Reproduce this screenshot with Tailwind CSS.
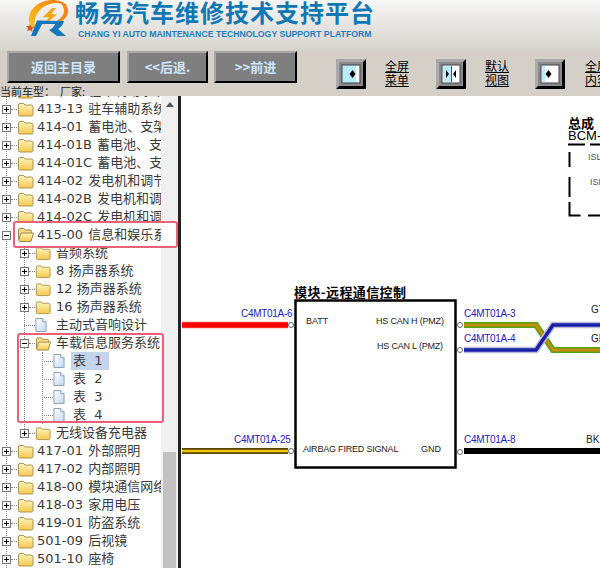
<!DOCTYPE html>
<html lang="zh">
<head>
    <meta charset="UTF-8">
    <title>畅易汽车维修技术支持平台</title>
    <script src="https://cdn.jsdelivr.net/npm/@tailwindcss/browser@4"></script>
</head>
<body class="bg-[#d4d0c8]">
    <!-- icon symbols -->
    <svg class="absolute w-0 h-0">
        <defs>
            <linearGradient id="fy" x1="0" y1="0" x2="0" y2="1"><stop offset="0" stop-color="#fff4bc"/><stop offset="1" stop-color="#f3c84e"/></linearGradient>
            <linearGradient id="dc" x1="0" y1="0" x2="1" y2="1"><stop offset="0" stop-color="#fff"/><stop offset="1" stop-color="#c4d8f0"/></linearGradient>
            <linearGradient id="ring" x1="0" y1="1" x2="1" y2="0"><stop offset="0" stop-color="#f7c520"/><stop offset="0.6" stop-color="#f59a10"/><stop offset="1" stop-color="#ee7a10"/></linearGradient>
        </defs>
        <symbol id="plus" viewBox="0 0 9 9"><rect x="0.5" y="0.5" width="8" height="8" fill="#fff" stroke="#777"/><path d="M2 4.500h5M4.500 2v5" stroke="#000"/></symbol>
        <symbol id="minus" viewBox="0 0 9 9"><rect x="0.5" y="0.5" width="8" height="8" fill="#fff" stroke="#777"/><path d="M2 4.500h5" stroke="#000"/></symbol>
        <symbol id="folder" viewBox="0 0 17 15"><path d="M1.500 12.500V3q0-1.500 1.500-1.500h3.500l1.500 1.500h6q2 0 2 1.500v8q0 1.500-1.500 1.500h-11.500q-1.500 0-1.500-1.500z" fill="url(#fy)" stroke="#b0934e"/></symbol>
        <symbol id="open" viewBox="0 0 17 15"><path d="M1.500 12.500V3q0-1.500 1.500-1.500h3.500l1.500 1.500h5q1.500 0 1.500 1.500v1.500" fill="#f8dc80" stroke="#a0844a"/><path d="M1.500 13.500l2.500-7.500h12.500l-2.500 8.500h-11.500z" fill="url(#fy)" stroke="#a0844a"/></symbol>
        <symbol id="doc" viewBox="0 0 13 15"><path d="M1 0.500h7.500l3.500 3.500v10.500h-11z" fill="url(#dc)" stroke="#7f9db9"/><path d="M8.500 0.500v3.500h3.500" fill="#fff" stroke="#7f9db9"/></symbol>
    </svg>

    <div class="relative w-[600px] h-[568px] overflow-hidden bg-[#d4d0c8] font-['Noto_Sans_CJK_SC',sans-serif]">
        <!-- header -->
        <header class="relative h-[50px] flex items-start bg-gradient-to-b from-[#f6f6f6] to-[#d6d4ce]">
            <svg class="ml-[20px] w-[60px] h-[42px] shrink-0" viewBox="20 0 60 42" fill="none">
                <path d="M31 27C24 14 36 0 52 0c7 0 12 2 16 6-6-3-12-4-18-2-11 3-17 13-15 23z" fill="url(#ring)"/>
                <path d="M59 2c7 1 10 6 9 11-1 4-4 7-8 9l-3-1c4-3 7-6 7-10 0-4-2-7-5-9z" fill="#ee8a12"/>
                <path d="M52 8l-9 9 6 .5-6 8 14-11-6-.5 5-6z" fill="#f5a514"/>
                <path d="M30 24.500l1.500 2.500 3 .5-2.500 1.500.5 3-2.500-2-3 1 1-3-2-2h3z" fill="#e2501c"/>
                <path d="M36 36l6-12h13c-1 3-3 5-6 6l8 6h9l-8-7c3-2 5-4 6-8h-3l-24-.5-6 15.500z" fill="#1578bc"/>
            </svg>
            <div class="ml-[-5px] shrink-0">
                <h1 class="text-[24px] leading-[30px] mt-[-3px] font-bold tracking-[1px] text-[#0f78b4] whitespace-nowrap">畅易汽车维修技术支持平台</h1>
                <p class="ml-[3px] mt-[2px] text-[8.700px] leading-[10px] font-bold text-[#1a7fc0] whitespace-nowrap font-['Liberation_Sans',sans-serif]">CHANG YI AUTO MAINTENANCE TECHNOLOGY SUPPORT PLATFORM</p>
            </div>
        </header>

        <!-- toolbar -->
        <div class="relative h-[36px] flex items-start [&>*]:shrink-0">
            <button class="ml-[7px] mt-[1px] w-[113px] h-[32px] bg-[#7f7f7f] border-2 border-t-[#a8a8a8] border-l-[#a8a8a8] border-r-black border-b-black text-[13px] font-bold text-[#cfe6ff]">返回主目录</button>
            <button class="ml-[7px] mt-[1px] w-[81px] h-[32px] bg-[#7f7f7f] border-2 border-t-[#a8a8a8] border-l-[#a8a8a8] border-r-black border-b-black text-[13px] font-bold text-[#cfe6ff]">&lt;&lt;后退.</button>
            <button class="ml-[6px] mt-[1px] w-[83px] h-[32px] bg-[#7f7f7f] border-2 border-t-[#a8a8a8] border-l-[#a8a8a8] border-r-black border-b-black text-[13px] font-bold text-[#cfe6ff]">&gt;&gt;前进</button>

            <svg class="ml-[39px] mt-[9px] w-[30px] h-[30px] relative z-10" viewBox="0 0 30 30">
                <path d="M0 0h30l-3 3h-24v24l-3 3z" fill="#a9a9a9"/><path d="M30 0v30h-30l3-3h24v-24z" fill="#000"/><rect x="3" y="3" width="24" height="24" fill="#8a8a8a"/>
                <rect x="6" y="6" width="18" height="18" fill="#b9ecff" stroke="#444"/><rect x="20" y="7" width="3" height="16" fill="#fff"/><path d="M16.500 11l3 4-3 4-3-4z" fill="#000"/>
            </svg>
            <a class="ml-[19px] mt-[9px] w-[24px] text-[12px] leading-[14px] underline text-black relative z-10">全屏<br>菜单</a>

            <svg class="ml-[27px] mt-[9px] w-[30px] h-[30px] relative z-10" viewBox="0 0 30 30">
                <path d="M0 0h30l-3 3h-24v24l-3 3z" fill="#a9a9a9"/><path d="M30 0v30h-30l3-3h24v-24z" fill="#000"/><rect x="3" y="3" width="24" height="24" fill="#8a8a8a"/>
                <rect x="6" y="6" width="18" height="18" fill="#fff" stroke="#444"/><rect x="7" y="7" width="8" height="16" fill="#b9ecff"/><rect x="15" y="7" width="1" height="16" fill="#555"/><path d="M10 11l3 4-3 4zM20 11l-3 4 3 4z" fill="#000"/>
            </svg>
            <a class="ml-[19px] mt-[9px] w-[24px] text-[12px] leading-[14px] underline text-black relative z-10">默认<br>视图</a>

            <svg class="ml-[26px] mt-[9px] w-[30px] h-[30px] relative z-10" viewBox="0 0 30 30">
                <path d="M0 0h30l-3 3h-24v24l-3 3z" fill="#a9a9a9"/><path d="M30 0v30h-30l3-3h24v-24z" fill="#000"/><rect x="3" y="3" width="24" height="24" fill="#8a8a8a"/>
                <rect x="6" y="6" width="18" height="18" fill="#fff" stroke="#444"/><rect x="7" y="7" width="3" height="16" fill="#b9ecff"/><path d="M13.500 11l-3 4 3 4 3-4z" fill="#000"/>
            </svg>
            <a class="ml-[20px] mt-[9px] w-[24px] text-[12px] leading-[14px] underline text-black relative z-10">全屏<br>内容</a>
        </div>

        <!-- status line -->
        <div class="relative z-10 h-[10px] text-[11px] leading-[11px] text-[#222] whitespace-pre">当前车型：  厂家:</div>

        <!-- main -->
        <div class="flex h-[472px]">
            <!-- tree panel -->
            <div class="relative w-[178px] shrink-0 bg-white overflow-hidden">
                <div class="relative w-[161px] h-[486px] overflow-hidden mt-[-14px] text-[13px] text-[#3a3a3a] font-['DejaVu_Sans','Noto_Sans_CJK_SC',sans-serif] [&_*]:shrink-0">
                    <!-- dotted guides -->
                    <div class="absolute left-[6px] top-0 h-[500px] border-l border-dotted border-[#888]"></div>
                    <div class="absolute left-[24px] top-[162px] h-[189px] border-l border-dotted border-[#888]"></div>
                    <div class="absolute left-[42px] top-[270px] h-[72px] border-l border-dotted border-[#888]"></div>

                    <div class="flex items-center h-[18px] whitespace-nowrap"><svg class="ml-[2px] w-[9px] h-[9px] relative"><use href="#plus"/></svg><span class="w-[6px] border-t border-dotted border-[#888]"></span><svg class="w-[17px] h-[15px]"><use href="#folder"/></svg><span class="ml-[3px] [word-spacing:1px]">413-12 驻车制动系统</span></div>
                    <div class="flex items-center h-[18px] whitespace-nowrap"><svg class="ml-[2px] w-[9px] h-[9px] relative"><use href="#plus"/></svg><span class="w-[6px] border-t border-dotted border-[#888]"></span><svg class="w-[17px] h-[15px]"><use href="#folder"/></svg><span class="ml-[3px] [word-spacing:1px]">413-13 驻车辅助系统</span></div>
                    <div class="flex items-center h-[18px] whitespace-nowrap"><svg class="ml-[2px] w-[9px] h-[9px] relative"><use href="#plus"/></svg><span class="w-[6px] border-t border-dotted border-[#888]"></span><svg class="w-[17px] h-[15px]"><use href="#folder"/></svg><span class="ml-[3px] [word-spacing:1px]">414-01 蓄电池、支架</span></div>
                    <div class="flex items-center h-[18px] whitespace-nowrap"><svg class="ml-[2px] w-[9px] h-[9px] relative"><use href="#plus"/></svg><span class="w-[6px] border-t border-dotted border-[#888]"></span><svg class="w-[17px] h-[15px]"><use href="#folder"/></svg><span class="ml-[3px] [word-spacing:1px]">414-01B 蓄电池、支架</span></div>
                    <div class="flex items-center h-[18px] whitespace-nowrap"><svg class="ml-[2px] w-[9px] h-[9px] relative"><use href="#plus"/></svg><span class="w-[6px] border-t border-dotted border-[#888]"></span><svg class="w-[17px] h-[15px]"><use href="#folder"/></svg><span class="ml-[3px] [word-spacing:1px]">414-01C 蓄电池、支架</span></div>
                    <div class="flex items-center h-[18px] whitespace-nowrap"><svg class="ml-[2px] w-[9px] h-[9px] relative"><use href="#plus"/></svg><span class="w-[6px] border-t border-dotted border-[#888]"></span><svg class="w-[17px] h-[15px]"><use href="#folder"/></svg><span class="ml-[3px] [word-spacing:1px]">414-02 发电机和调节器</span></div>
                    <div class="flex items-center h-[18px] whitespace-nowrap"><svg class="ml-[2px] w-[9px] h-[9px] relative"><use href="#plus"/></svg><span class="w-[6px] border-t border-dotted border-[#888]"></span><svg class="w-[17px] h-[15px]"><use href="#folder"/></svg><span class="ml-[3px] [word-spacing:1px]">414-02B 发电机和调节器</span></div>
                    <div class="flex items-center h-[18px] whitespace-nowrap"><svg class="ml-[2px] w-[9px] h-[9px] relative"><use href="#plus"/></svg><span class="w-[6px] border-t border-dotted border-[#888]"></span><svg class="w-[17px] h-[15px]"><use href="#folder"/></svg><span class="ml-[3px] [word-spacing:1px]">414-02C 发电机和调节器</span></div>
                    <!-- 415-00: folder and label live in the highlight box below -->
                    <div class="flex items-center h-[18px]"><svg class="ml-[2px] w-[9px] h-[9px] relative"><use href="#minus"/></svg></div>

                    <div class="flex items-center h-[18px] whitespace-nowrap pl-[20px]"><svg class="w-[9px] h-[9px] relative"><use href="#plus"/></svg><span class="w-[6px] border-t border-dotted border-[#888]"></span><svg class="w-[16px] h-[15px]"><use href="#folder"/></svg><span class="ml-[5px]">音频系统</span></div>
                    <div class="flex items-center h-[18px] whitespace-nowrap pl-[20px]"><svg class="w-[9px] h-[9px] relative"><use href="#plus"/></svg><span class="w-[6px] border-t border-dotted border-[#888]"></span><svg class="w-[16px] h-[15px]"><use href="#folder"/></svg><span class="ml-[5px]">8 扬声器系统</span></div>
                    <div class="flex items-center h-[18px] whitespace-nowrap pl-[20px]"><svg class="w-[9px] h-[9px] relative"><use href="#plus"/></svg><span class="w-[6px] border-t border-dotted border-[#888]"></span><svg class="w-[16px] h-[15px]"><use href="#folder"/></svg><span class="ml-[5px]">12 扬声器系统</span></div>
                    <div class="flex items-center h-[18px] whitespace-nowrap pl-[20px]"><svg class="w-[9px] h-[9px] relative"><use href="#plus"/></svg><span class="w-[6px] border-t border-dotted border-[#888]"></span><svg class="w-[16px] h-[15px]"><use href="#folder"/></svg><span class="ml-[5px]">16 扬声器系统</span></div>
                    <div class="flex items-center h-[18px] whitespace-nowrap pl-[24px]"><span class="w-[11px] border-t border-dotted border-[#888]"></span><svg class="w-[12px] h-[14px]"><use href="#doc"/></svg><span class="ml-[9px]">主动式音响设计</span></div>
                    <div class="flex items-center h-[18px] whitespace-nowrap pl-[20px]"><svg class="w-[9px] h-[9px] relative"><use href="#minus"/></svg><span class="w-[6px] border-t border-dotted border-[#888]"></span><svg class="w-[16px] h-[15px]"><use href="#open"/></svg><span class="ml-[5px]">车载信息服务系统</span></div>
                    <div class="flex items-center h-[18px] whitespace-nowrap pl-[42px]"><span class="w-[11px] border-t border-dotted border-[#888]"></span><svg class="w-[12px] h-[14px]"><use href="#doc"/></svg><span class="ml-[6px] px-[2px] bg-[#c3d5ea] leading-[18px] whitespace-pre">表  1 </span></div>
                    <div class="flex items-center h-[18px] whitespace-nowrap pl-[42px]"><span class="w-[11px] border-t border-dotted border-[#888]"></span><svg class="w-[12px] h-[14px]"><use href="#doc"/></svg><span class="ml-[8px] whitespace-pre">表  2</span></div>
                    <div class="flex items-center h-[18px] whitespace-nowrap pl-[42px]"><span class="w-[11px] border-t border-dotted border-[#888]"></span><svg class="w-[12px] h-[14px]"><use href="#doc"/></svg><span class="ml-[8px] whitespace-pre">表  3</span></div>
                    <div class="flex items-center h-[18px] whitespace-nowrap pl-[42px]"><span class="w-[11px] border-t border-dotted border-[#888]"></span><svg class="w-[12px] h-[14px]"><use href="#doc"/></svg><span class="ml-[8px] whitespace-pre">表  4</span></div>
                    <div class="flex items-center h-[18px] whitespace-nowrap pl-[20px]"><svg class="w-[9px] h-[9px] relative"><use href="#plus"/></svg><span class="w-[6px] border-t border-dotted border-[#888]"></span><svg class="w-[16px] h-[15px]"><use href="#folder"/></svg><span class="ml-[5px]">无线设备充电器</span></div>

                    <div class="flex items-center h-[18px] whitespace-nowrap"><svg class="ml-[2px] w-[9px] h-[9px] relative"><use href="#plus"/></svg><span class="w-[6px] border-t border-dotted border-[#888]"></span><svg class="w-[17px] h-[15px]"><use href="#folder"/></svg><span class="ml-[3px] [word-spacing:1px]">417-01 外部照明</span></div>
                    <div class="flex items-center h-[18px] whitespace-nowrap"><svg class="ml-[2px] w-[9px] h-[9px] relative"><use href="#plus"/></svg><span class="w-[6px] border-t border-dotted border-[#888]"></span><svg class="w-[17px] h-[15px]"><use href="#folder"/></svg><span class="ml-[3px] [word-spacing:1px]">417-02 内部照明</span></div>
                    <div class="flex items-center h-[18px] whitespace-nowrap"><svg class="ml-[2px] w-[9px] h-[9px] relative"><use href="#plus"/></svg><span class="w-[6px] border-t border-dotted border-[#888]"></span><svg class="w-[17px] h-[15px]"><use href="#folder"/></svg><span class="ml-[3px] [word-spacing:1px]">418-00 模块通信网络</span></div>
                    <div class="flex items-center h-[18px] whitespace-nowrap"><svg class="ml-[2px] w-[9px] h-[9px] relative"><use href="#plus"/></svg><span class="w-[6px] border-t border-dotted border-[#888]"></span><svg class="w-[17px] h-[15px]"><use href="#folder"/></svg><span class="ml-[3px] [word-spacing:1px]">418-03 家用电压</span></div>
                    <div class="flex items-center h-[18px] whitespace-nowrap"><svg class="ml-[2px] w-[9px] h-[9px] relative"><use href="#plus"/></svg><span class="w-[6px] border-t border-dotted border-[#888]"></span><svg class="w-[17px] h-[15px]"><use href="#folder"/></svg><span class="ml-[3px] [word-spacing:1px]">419-01 防盗系统</span></div>
                    <div class="flex items-center h-[18px] whitespace-nowrap"><svg class="ml-[2px] w-[9px] h-[9px] relative"><use href="#plus"/></svg><span class="w-[6px] border-t border-dotted border-[#888]"></span><svg class="w-[17px] h-[15px]"><use href="#folder"/></svg><span class="ml-[3px] [word-spacing:1px]">501-09 后视镜</span></div>
                    <div class="flex items-center h-[18px] whitespace-nowrap"><svg class="ml-[2px] w-[9px] h-[9px] relative"><use href="#plus"/></svg><span class="w-[6px] border-t border-dotted border-[#888]"></span><svg class="w-[17px] h-[15px]"><use href="#folder"/></svg><span class="ml-[3px] [word-spacing:1px]">501-10 座椅</span></div>
                </div>

                <!-- scrollbar -->
                <div class="absolute left-[161px] top-0 w-[17px] h-full bg-[#f0f0f0]">
                    <div class="mx-auto mt-[6px] w-0 h-0 border-x-[4px] border-x-transparent border-b-[5px] border-b-[#555]"></div>
                    <div class="absolute left-[2px] top-[356px] w-[13px] h-[116px] bg-[#c2c2c2]"></div>
                </div>

                <!-- red highlight boxes -->
                <div class="absolute left-[13px] top-[125px] w-[165px] h-[27px] bg-white border-[2px] border-[#ea6078] rounded-[3px] flex items-center overflow-hidden text-[13px] text-[#3a3a3a] font-['DejaVu_Sans','Noto_Sans_CJK_SC',sans-serif]">
                    <svg class="ml-[2px] w-[17px] h-[15px] shrink-0"><use href="#open"/></svg>
                    <span class="ml-[3px] w-[124px] overflow-hidden whitespace-nowrap shrink-0 [word-spacing:1px]">415-00 信息和娱乐系统</span>
                </div>
                <div class="absolute left-[17px] top-[237px] w-[147px] h-[90px] border-[2px] border-[#ea6078] rounded-[3px]"></div>
            </div>

            <div class="w-[3px] shrink-0 bg-[#222]"></div>

            <!-- wiring diagram -->
            <div class="relative flex-1 bg-white overflow-hidden font-['Liberation_Sans',sans-serif] text-[9px] leading-[11px] text-[#222] whitespace-nowrap">
                <svg class="absolute left-0 top-0 w-[419px] h-[472px]" viewBox="181 96 419 472" fill="none">
                    <!-- BCM dashed outline -->
                    <path d="M568 144.500h17M590 144.500h10M569.500 152v15M569.500 177v20M569.500 202v13.500h11M588 215.500h12" stroke="#000" stroke-width="2"/>
                    <!-- module -->
                    <rect x="295.500" y="300.500" width="160" height="167" fill="#fff" stroke="#000" stroke-width="2.500"/>
                    <!-- left wires -->
                    <path d="M182 325h106" stroke="#ffb0b0" stroke-width="7"/><path d="M182 325h106" stroke="#f00" stroke-width="5.500"/>
                    <path d="M182 451h106" stroke="#5c4300" stroke-width="6"/><path d="M182 451h106" stroke="#efc400" stroke-width="2.500"/>
                    <!-- right wires -->
                    <path d="M464 325h72l17 25h47" stroke="#4fa510" stroke-width="6"/><path d="M464 325h72l17 25h47" stroke="#c98a10" stroke-width="3"/>
                    <path d="M464 350h72l17-25h47" stroke="#b9bdd8" stroke-width="6.500"/><path d="M464 350h72l17-25h47" stroke="#1a1ea8" stroke-width="3.500"/>
                    <path d="M464 451h136" stroke="#000" stroke-width="6"/>
                    <!-- connectors -->
                    <g stroke="#666" fill="#fff">
                        <circle cx="291" cy="325" r="2.500"/><circle cx="291" cy="451" r="2.500"/>
                        <circle cx="460" cy="325" r="2.500"/><circle cx="460" cy="350" r="2.500"/><circle cx="460" cy="452" r="2.500"/>
                    </g>
                </svg>

                <div class="absolute left-[113px] top-[188px] text-[13px] leading-[16px] font-bold text-black tracking-[0.400px] font-['Noto_Sans_CJK_SC',sans-serif]">模块-远程通信控制</div>
                <div class="absolute left-[387px] top-[20px] text-[13px] leading-[13px] font-bold text-black font-['Noto_Sans_CJK_SC',sans-serif]">总成</div>
                <div class="absolute left-[387px] top-[33px] text-[13px] leading-[13px] text-black">BCM-</div>
                <div class="absolute left-[407px] top-[56px] text-[#555]">ISL</div>
                <div class="absolute left-[409px] top-[81px] text-[#555]">ISL</div>

                <div class="absolute left-[60px] top-[212px] text-[#2222bb] text-[10px] tracking-[-0.300px]">C4MT01A-6</div>
                <div class="absolute left-[53px] top-[338px] text-[#2222bb] text-[10px] tracking-[-0.300px]">C4MT01A-25</div>
                <div class="absolute left-[283px] top-[212px] text-[#2222bb] text-[10px] tracking-[-0.300px]">C4MT01A-3</div>
                <div class="absolute left-[283px] top-[237px] text-[#2222bb] text-[10px] tracking-[-0.300px]">C4MT01A-4</div>
                <div class="absolute left-[283px] top-[338px] text-[#2222bb] text-[10px] tracking-[-0.300px]">C4MT01A-8</div>

                <div class="absolute left-[125px] top-[220px]">BATT</div>
                <div class="absolute left-[195px] top-[220px] tracking-[-0.200px]">HS CAN H (PMZ)</div>
                <div class="absolute left-[196px] top-[245px] tracking-[-0.200px]">HS CAN L (PMZ)</div>
                <div class="absolute left-[122px] top-[348px] tracking-[-0.200px]">AIRBAG FIRED SIGNAL</div>
                <div class="absolute left-[240px] top-[348px]">GND</div>

                <div class="absolute left-[410px] top-[208px] text-[10px]">GY</div>
                <div class="absolute left-[410px] top-[237px] text-[10px]">GN</div>
                <div class="absolute left-[405px] top-[338px] text-[10px]">BK,</div>
            </div>
        </div>
    </div>
</body>
</html>
